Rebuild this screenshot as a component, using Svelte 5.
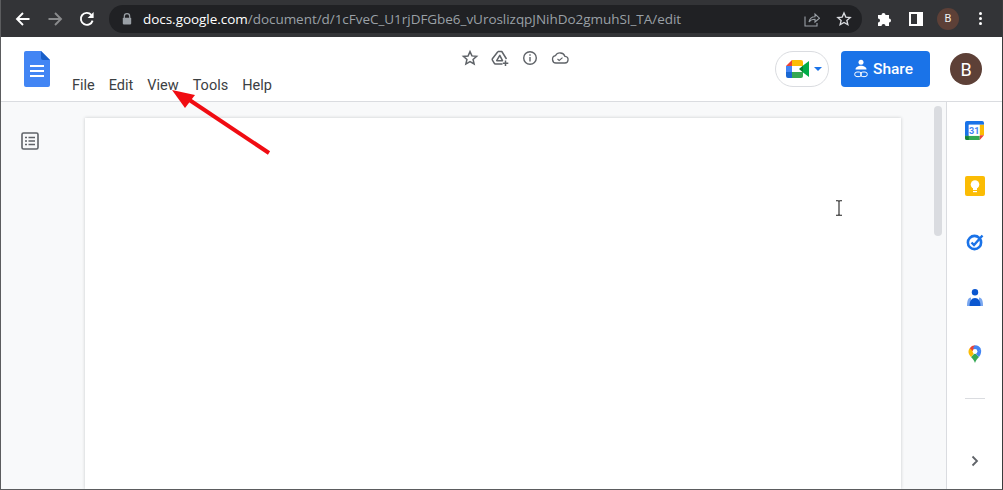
<script>
  const menus = ['File', 'Edit', 'View', 'Tools', 'Help'];
</script>

<div class="window">
  <div class="chrome">
    <svg class="nav" width="16" height="16" viewBox="0 0 16 16"><path d="M14.5 8H2.5M8 2 2 8l6 6" fill="none" stroke="#fff" stroke-width="1.9"/></svg>
    <svg class="nav" width="16" height="16" viewBox="0 0 16 16"><path d="M1.5 8h12M8 2l6 6-6 6" fill="none" stroke="#8a8b8d" stroke-width="1.9"/></svg>
    <svg class="nav" width="16" height="16" viewBox="0 0 16 16"><path d="M13.6 9.600A6 6 0 1 1 12.300 3.800" fill="none" stroke="#fff" stroke-width="1.9"/><path d="M14.600 1v6h-6z" fill="#fff"/></svg>
    <div class="omnibox">
      <svg class="lock" width="10" height="12" viewBox="0 0 10 12"><path d="M2.300 5V3.400a2.700 2.700 0 0 1 5.400 0V5" fill="none" stroke="#9aa0a6" stroke-width="1.2"/><rect x="0.800" y="4.800" width="8.400" height="6.600" rx="0.800" fill="#9aa0a6"/></svg>
      <span class="url"><b>docs.google.com</b>/document/d/1cFveC_U1rjDFGbe6_vUroslizqpJNihDo2gmuhSI_TA/edit</span>
      <span class="spacer"></span>
      <svg width="16" height="16" viewBox="0 0 16 16" class="omni-share"><path d="M1 5.500V15h12v-3" fill="none" stroke="#9aa0a6" stroke-width="1.100"/><path d="M5 11c.6-3.400 3-5.200 6-5.200V3l4.500 4.200L11 11V8.300C8.500 8.300 6.500 9 5 11z" fill="none" stroke="#9aa0a6" stroke-width="1.100"/></svg>
      <svg width="16" height="16" viewBox="0 0 24 24" class="omni-star"><path d="m12 3 2.700 6.100 6.600.6-5 4.400 1.500 6.500L12 17.200l-5.800 3.400 1.500-6.500-5-4.400 6.600-.6z" fill="none" stroke="#dadce0" stroke-width="2"/></svg>
    </div>
    <svg class="puzzle" width="16" height="16" viewBox="0 0 16 16"><path d="M1 4h3.500a2 2 0 1 1 4 0H12v3.500a2 2 0 1 1 0 4V15H8.500a2 2 0 1 0-4 0H1v-3.500a2 2 0 1 0 0-4z" fill="#fff"/></svg>
    <span class="sidepanel"></span>
    <span class="chrome-avatar">B</span>
    <span class="dots"><i></i><i></i><i></i></span>
  </div>

  <header class="docbar">
    <svg class="docs-logo" width="26" height="36" viewBox="0 0 26 36">
      <path d="M2 0h15l9 9v25a2 2 0 0 1-2 2H2a2 2 0 0 1-2-2V2a2 2 0 0 1 2-2z" fill="#4285f4"/>
      <path d="M17 0l9 9h-7a2 2 0 0 1-2-2z" fill="#1a5fc8"/>
      <path d="M6 14h14v2H6zM6 19h14v2H6zM6 24h14v2H6z" fill="#fff"/>
    </svg>
    <div class="title-col">
      <div class="status-icons">
        <svg width="18" height="18" viewBox="0 0 24 24"><path d="m12 3.500 2.600 5.700 6.200.6-4.700 4.100 1.400 6.100L12 16.900 6.500 20.100l1.400-6.100-4.700-4.100 6.200-.6z" fill="none" stroke="#5f6368" stroke-width="2"/></svg>
        <svg width="18" height="18" viewBox="0 0 18 18"><path d="M7 2.500h3.800L15.500 10M11.500 15H4.500a1.500 1.500 0 0 1-1.300-.8l-1.800-3a1.500 1.500 0 0 1 0-1.500L7 2.500M8.800 6.300 5.700 11.700h5.800z" fill="none" stroke="#5f6368" stroke-width="1.500" stroke-linejoin="round"/><path d="M14.500 11.500v5.500M11.800 14.200h5.500" stroke="#5f6368" stroke-width="1.500"/></svg>
        <svg width="18" height="18" viewBox="0 0 18 18"><circle cx="9" cy="9" r="6.300" fill="none" stroke="#5f6368" stroke-width="1.400"/><path d="M8.300 8h1.400v4.500H8.300zM8.300 5.300h1.400v1.400H8.300z" fill="#5f6368"/></svg>
        <svg width="18" height="18" viewBox="0 0 18 18"><path d="M5 14a3.700 3.700 0 0 1-.6-7.300A5.300 5.300 0 0 1 14 7.400 3.300 3.300 0 0 1 13.500 14z" fill="none" stroke="#5f6368" stroke-width="1.300"/><path d="m6.500 10 1.700 1.500 3.300-2.800" fill="none" stroke="#5f6368" stroke-width="1.100"/></svg>
      </div>
      <nav class="menus">
        {#each menus as m}<span>{m}</span>{/each}
      </nav>
    </div>
    <div class="spacer"></div>
    <button class="meet" aria-label="Meet">
      <svg width="24" height="18" viewBox="0 0 24 18">
        <path d="M6 0h9a2 2 0 0 1 2 2v4H6z" fill="#fbbc04"/>
        <path d="M6 0v6H0z" fill="#ea4335"/>
        <path d="M0 6h6v6H0z" fill="#4285f4"/>
        <path d="M0 12h6v6H2a2 2 0 0 1-2-2z" fill="#1967d2"/>
        <path d="M6 12h11v4a2 2 0 0 1-2 2H6z" fill="#34a853"/>
        <path d="M6 6h7v6H6z" fill="#fff"/>
        <path d="M13 9l4-3.500V12.500z" fill="#00832d"/>
        <path d="M17 5.500 23 1v16L17 12.500z" fill="#00ac47"/>
      </svg>
      <svg class="caret" width="8" height="4" viewBox="0 0 8 4"><path d="M0 0h8L4 4z" fill="#1a73e8"/></svg>
    </button>
    <button class="share">
      <svg width="14" height="20" viewBox="0 0 14 20" style="overflow:visible"><circle cx="7" cy="3.200" r="2.500" fill="#fff"/><path d="M1.500 10.500C1.500 8 4.500 6.800 7 6.800s5.500 1.200 5.500 3.700z" fill="#fff"/><rect x="0.700" y="13" width="6.800" height="4.600" rx="2.300" fill="none" stroke="#fff" stroke-width="1"/><rect x="6.500" y="13" width="6.800" height="4.600" rx="2.300" fill="none" stroke="#fff" stroke-width="1"/></svg>
      <span>Share</span>
    </button>
    <span class="avatar">B</span>
  </header>

  <div class="body">
    <aside class="outline">
      <svg width="18" height="18" viewBox="0 0 18 18"><rect x="1" y="1" width="16" height="16" rx="1.500" fill="none" stroke="#5f6368" stroke-width="1.600"/><path d="M4 5.500h2M7.500 5.500h6.500M4 9h2M7.500 9h6.500M4 12.500h2M7.500 12.500h6.500" stroke="#5f6368" stroke-width="1.500"/></svg>
    </aside>
    <main class="canvas">
      <div class="page"></div>
      <div class="scroll"><div class="thumb"></div></div>
    </main>
    <aside class="addons">
      <svg class="cal" width="19" height="19" viewBox="0 0 20 20"><path d="M2 0h16a2 2 0 0 1 2 2v2H0V2a2 2 0 0 1 2-2z" fill="#1a73e8"/><path d="M0 2h4v14H0z" fill="#1a73e8"/><path d="M15 4h5v11h-5z" fill="#fbbc04"/><path d="M4 15.500h11.500V20H2a2 2 0 0 1-2-2v-2.500z" fill="#34a853"/><path d="M0 16h4v4H2a2 2 0 0 1-2-2z" fill="#188038"/><path d="M15.500 15H20l-4.500 5z" fill="#ea4335"/><rect x="4" y="4" width="11.500" height="11.500" fill="#fff"/><text x="9.700" y="13.500" class="cal-t">31</text></svg>
      <svg class="keep" width="20" height="20" viewBox="0 0 20 20"><rect width="20" height="20" rx="2" fill="#fbbc04"/><circle cx="10" cy="8.500" r="4.300" fill="#fff"/><path d="M8 12h4v2H8z" fill="#fff"/><path d="M8 15h4v1.200H8z" fill="#fff"/></svg>
      <svg class="tasks" width="18" height="18" viewBox="0 0 18 18"><circle cx="8.500" cy="9.500" r="6.600" fill="none" stroke="#1a73e8" stroke-width="2.600"/><path d="m5.500 9.500 2.500 2.500 8.500-9.500" fill="none" stroke="#1a73e8" stroke-width="2.400"/></svg>
      <svg class="contacts" width="16" height="17" viewBox="0 0 16 17"><circle cx="8" cy="3.300" r="3.200" fill="#0b57d0"/><path d="M0 17c0-5 .8-8 4-8.500v8.500z" fill="#7aa7ef"/><path d="M16 17c0-5-.8-8-4-8.500v8.500z" fill="#7aa7ef"/><path d="M2.500 17c0-5 2-8 5.500-8s5.500 3 5.500 8z" fill="#0b57d0"/></svg>
      <svg class="maps" width="14" height="18" viewBox="0 0 14 18"><path d="M7 18c-1-3-2.500-4.200-4-6L7 8l4 4c-1.500 1.800-3 3-4 6z" fill="#34a853"/><path d="M3 12C1.500 10.200.5 8.700.5 6.700c0-1.200.4-2.500 1.200-3.400L7 7z" fill="#fbbc04"/><path d="M1.700 3.300A6.500 6.500 0 0 1 7 .2L7 5 4.500 6z" fill="#ea4335"/><path d="M7 .2a6.500 6.500 0 0 1 6 4L9.500 7 5 3z" fill="#4285f4"/><path d="M13 4.200c.5 2.200.2 4.800-2 7.800L7 8z" fill="#4285f4"/><circle cx="7" cy="6.500" r="2.400" fill="#fff"/></svg>
      <span class="divider"></span>
      <svg class="chev" width="8" height="12" viewBox="0 0 8 12"><path d="m1.500 1.500 4.500 4.500-4.500 4.500" fill="none" stroke="#5f6368" stroke-width="1.800"/></svg>
    </aside>
  </div>

  <svg class="arrow" width="110" height="80" viewBox="0 0 110 80">
    <path d="M98 65 17 11" stroke="#f00c12" stroke-width="4" fill="none"/>
    <path d="M1 2 24 7 14 20z" fill="#f00c12"/>
  </svg>

  <svg class="cursor" width="8" height="16" viewBox="0 0 8 16"><path d="M1 .7h2.200L4 1.500 4.800.7H7M4 1.500v13M1 15.300h2.200l.8-.8.8.8H7" fill="none" stroke="#222" stroke-width="1.100"/></svg>
</div>

<style>
  :global(body) { margin: 0; overflow: hidden; background: #fff; }
  .window {
    position: relative;
    width: 1003px;
    height: 490px;
    box-sizing: border-box;
    border-left: 1px solid #5b5c5e;
    border-right: 1px solid #3a3b3d;
    border-bottom: 1px solid #5b5c5e;
    display: flex;
    flex-direction: column;
    overflow: hidden;
    font-family: Roboto, "Liberation Sans", sans-serif;
  }
  .chrome {
    height: 37px;
    flex: none;
    background: #333437;
    display: flex;
    align-items: center;
    padding: 0 0 0 14px;
    gap: 16px;
    box-sizing: border-box;
  }
  .nav { flex: none; }
  .omnibox {
    flex: none;
    margin-left: -2px;
    width: 753px;
    height: 28px;
    box-sizing: border-box;
    padding: 0 10px 0 13px;
    border-radius: 14px;
    background: #202124;
    display: flex;
    align-items: center;
  }
  .lock { flex: none; margin-right: 11px; }
  .url {
    font-family: "Open Sans", "Noto Sans", sans-serif;
    font-size: 13.5px;
    color: #9aa0a6;
    letter-spacing: -0.04px;
    white-space: nowrap;
  }
  .url b { font-weight: 400; color: #fff; }
  .spacer { flex: 1; }
  .omni-star { margin-left: 16px; }
  .puzzle { flex: none; margin-left: -1px; }
  .sidepanel {
    flex: none;
    width: 14px;
    height: 14px;
    box-sizing: border-box;
    border: 2px solid #fff;
    border-right-width: 6px;
    margin-left: 0;
  }
  .chrome-avatar {
    flex: none;
    width: 22px;
    height: 22px;
    border-radius: 50%;
    background: #5d4037;
    color: #f1f3f4;
    font-size: 11px;
    display: flex;
    align-items: center;
    justify-content: center;
    margin-left: -2px;
  }
  .dots { display: flex; flex-direction: column; gap: 2px; margin-left: 4px; }
  .dots i { display: block; width: 3px; height: 3px; border-radius: 50%; background: #fff; }
  .docbar {
    height: 65px;
    flex: none;
    background: #fff;
    border-bottom: 1px solid #dadce0;
    box-sizing: border-box;
    display: flex;
    align-items: flex-start;
    position: relative;
  }
  .docs-logo { flex: none; margin: 14px 0 0 23px; }
  .title-col { flex: none; width: 690px; margin-left: 22px; position: relative; height: 100%; }
  .status-icons {
    display: flex;
    gap: 12px;
    position: absolute;
    left: 389px;
    top: 12px;
  }
  .menus {
    position: absolute;
    left: 0;
    top: 40px;
    display: flex;
    gap: 14px;
    font-size: 14.5px;
    line-height: 18px;
    color: #3c4043;
  }
  .meet {
    flex: none;
    width: 54px;
    height: 36px;
    margin-top: 14px;
    padding: 0 0 0 10px;
    background: #fff;
    border: 1px solid #dadce0;
    border-radius: 18px;
    box-sizing: border-box;
    display: flex;
    align-items: center;
    gap: 4px;
  }
  .share {
    flex: none;
    width: 89px;
    height: 36px;
    margin: 14px 0 0 12px;
    padding: 0 0 0 13px;
    border: 0;
    border-radius: 4px;
    background: #1a73e8;
    color: #fff;
    font-family: Roboto, sans-serif;
    font-size: 15.5px;
    font-weight: 500;
    display: flex;
    align-items: center;
    gap: 5px;
  }
  .avatar {
    flex: none;
    width: 32px;
    height: 32px;
    margin: 16px 20px 0 20px;
    border-radius: 50%;
    background: #5d4037;
    color: #fff;
    font-size: 18px;
    display: flex;
    align-items: center;
    justify-content: center;
  }
  .body { flex: 1; display: flex; min-height: 0; background: #f8f9fa; }
  .outline { flex: none; width: 84px; padding: 30px 0 0 20px; box-sizing: border-box; }
  .outline svg { display: block; }
  .canvas { flex: 1; display: flex; min-width: 0; }
  .page {
    flex: none;
    width: 816px;
    margin-top: 16px;
    background: #fff;
    box-shadow: 0 0 3px rgba(60, 64, 67, 0.25);
  }
  .scroll { flex: 1; padding: 4px 4px 0 33px; }
  .thumb { width: 8px; height: 130px; border-radius: 4px; background: #dadce0; }
  .addons {
    flex: none;
    width: 55px;
    background: #fff;
    border-left: 1px solid #dadce0;
    display: flex;
    flex-direction: column;
    align-items: center;
    box-sizing: content-box;
    padding-top: 19px;
  }
  .addons svg { flex: none; display: block; }
  .keep { margin-top: 36px; }
  .tasks { margin-top: 37px; }
  .contacts { margin-top: 38px; }
  .maps { margin-top: 39px; }
  .divider { width: 20px; height: 1px; background: #dadce0; margin-top: 35px; flex: none; }
  .chev { margin-top: 56px; }
  .cal-t { font: 700 9.500px Roboto, sans-serif; fill: #4285f4; text-anchor: middle; }
  .arrow { position: absolute; left: 170px; top: 88px; }
  .cursor { position: absolute; left: 834px; top: 200px; }
</style>
